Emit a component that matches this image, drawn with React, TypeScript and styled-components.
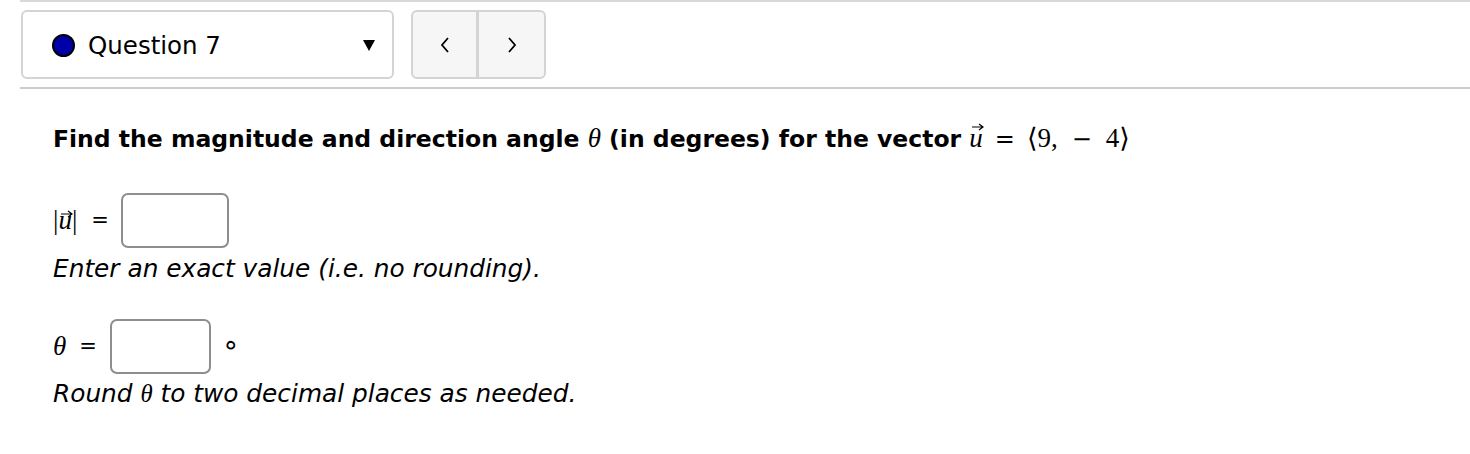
import styled, { createGlobalStyle } from "styled-components";

const GlobalStyle = createGlobalStyle`
  html, body {
    margin: 0;
    padding: 0;
    background: #ffffff;
  }
  body {
    font-family: "DejaVu Sans", Verdana, sans-serif;
    color: #000;
  }
`;

const Page = styled.div`
  width: 1450px;
  height: 454px;
  overflow: hidden;
  border-top: 2px solid #d8d8d8;
  box-sizing: border-box;
  margin-left: 20px;
`;

const NavBar = styled.div`
  display: flex;
  align-items: flex-start;
  gap: 17px;
  padding: 8px 0 0 1px;
  height: 85px;
  box-sizing: border-box;
`;

const Divider = styled.div`
  height: 2px;
  background: #cccccc;
`;

const QuestionSelect = styled.div`
  width: 373px;
  height: 69px;
  box-sizing: border-box;
  border: 2px solid #d4d4d4;
  border-radius: 6px;
  display: flex;
  align-items: center;
  padding: 2px 17px 0 29px;
  gap: 13px;
`;

const StatusDot = styled.span<{ $color: string }>`
  width: 19px;
  height: 19px;
  border-radius: 50%;
  background: ${(p) => p.$color};
  border: 2px solid #000;
  flex-shrink: 0;
`;

const SelectLabel = styled.span`
  flex: 1;
  font-size: 24.5px;
  font-family: "DejaVu Sans", sans-serif;
`;

const Caret = styled.span`
  width: 0;
  height: 0;
  border-left: 6px solid transparent;
  border-right: 6px solid transparent;
  border-top: 11px solid #000;
`;

const NavGroup = styled.div`
  display: flex;
  height: 69px;
  box-sizing: border-box;
  border: 2px solid #d4d4d4;
  border-radius: 6px;
  background: #f6f6f6;
  overflow: hidden;
`;

const NavButton = styled.button<{ $first?: boolean }>`
  width: ${(p) => (p.$first ? 66 : 65)}px;
  border: none;
  border-right: ${(p) => (p.$first ? "3px solid #d4d4d4" : "none")};
  background: transparent;
  display: flex;
  align-items: center;
  justify-content: center;
  padding: 0;
`;

const Content = styled.div`
  padding: 29px 0 0 33px;
`;

const Prompt = styled.div`
  font-weight: bold;
  font-size: 23.5px;
  line-height: 40px;
  white-space: nowrap;
`;

const Math = styled.span`
  font-family: "Liberation Serif", "DejaVu Serif", serif;
  font-weight: normal;
  font-size: 27px;
`;

const MathVar = styled.span`
  font-family: "Liberation Serif", "DejaVu Serif", serif;
  font-style: italic;
  font-weight: normal;
  position: relative;
  display: inline-block;
`;

const MathOp = styled.span<{ $space: number }>`
  display: inline-block;
  font-family: "DejaVu Sans", sans-serif;
  font-size: 24px;
  margin: 0 ${(p) => p.$space}px;
`;

const ArrowMark = styled.svg`
  position: absolute;
  left: 2px;
  top: 5px;
`;

const AnswerRow = styled.div<{ $top: number }>`
  display: flex;
  align-items: center;
  margin-top: ${(p) => p.$top}px;
  font-size: 24px;
  height: 56px;
`;

const AnswerBox = styled.div<{ $width: number }>`
  width: ${(p) => p.$width}px;
  height: 55px;
  box-sizing: border-box;
  border: 2px solid #8e8e8e;
  border-radius: 7px;
  background: #fff;
`;

const Hint = styled.div<{ $top: number }>`
  font-style: italic;
  font-size: 24.8px;
  margin-top: ${(p) => p.$top}px;
  line-height: 30px;
  white-space: nowrap;
`;

const Eq = styled.span<{ $left: number; $right: number }>`
  font-family: "DejaVu Sans", sans-serif;
  font-size: 21px;
  margin: 0 ${(p) => p.$right}px 0 ${(p) => p.$left}px;
`;

const Degree = styled.span`
  margin: 0 0 2px 11px;
  font-size: 28px;
  line-height: 1;
  font-family: "DejaVu Sans", sans-serif;
`;

function Chevron({ dir }: { dir: "left" | "right" }) {
  return (
    <svg width="12" height="22" viewBox="0 0 12 22">
      <path
        d={dir === "left" ? "M9 4 L3 11 L9 18" : "M3 4 L9 11 L3 18"}
        fill="none"
        stroke="#000"
        strokeWidth="1.8"
      />
    </svg>
  );
}

function UVec() {
  return (
    <MathVar>
      <ArrowMark width="13" height="8" viewBox="0 0 13 8">
        <path d="M1 4 H11 M8 1 L12 4 L8 7" fill="none" stroke="#000" strokeWidth="1.2" />
      </ArrowMark>
      u
    </MathVar>
  );
}

function NavRow() {
  return (
    <NavBar>
      <QuestionSelect>
        <StatusDot $color="#0000a8" />
        <SelectLabel>Question 7</SelectLabel>
        <Caret />
      </QuestionSelect>
      <NavGroup>
        <NavButton $first>
          <Chevron dir="left" />
        </NavButton>
        <NavButton>
          <Chevron dir="right" />
        </NavButton>
      </NavGroup>
    </NavBar>
  );
}

export default function App() {
  return (
    <>
      <GlobalStyle />
      <Page>
        <NavRow />
        <Divider />
        <Content>
          <Prompt>
            Find the magnitude and direction angle{" "}
            <Math>
              <MathVar>θ</MathVar>
            </Math>{" "}
            (in degrees) for the vector{" "}
            <Math>
              <UVec />
              <MathOp $space={12}>=</MathOp>⟨9,
              <MathOp $space={14}>−</MathOp>4⟩
            </Math>
          </Prompt>
          <AnswerRow $top={33}>
            <Math>
              |<UVec />|
            </Math>
            <Eq $left={14} $right={12}>=</Eq>
            <AnswerBox $width={108} />
          </AnswerRow>
          <Hint $top={6}>Enter an exact value (i.e. no rounding).</Hint>
          <AnswerRow $top={34}>
            <Math>
              <MathVar>θ</MathVar>
            </Math>
            <Eq $left={13} $right={13}>=</Eq>
            <AnswerBox $width={101} />
            <Degree>∘</Degree>
          </AnswerRow>
          <Hint $top={5}>
            Round <MathVar>θ</MathVar> to two decimal places as needed.
          </Hint>
        </Content>
      </Page>
    </>
  );
}
